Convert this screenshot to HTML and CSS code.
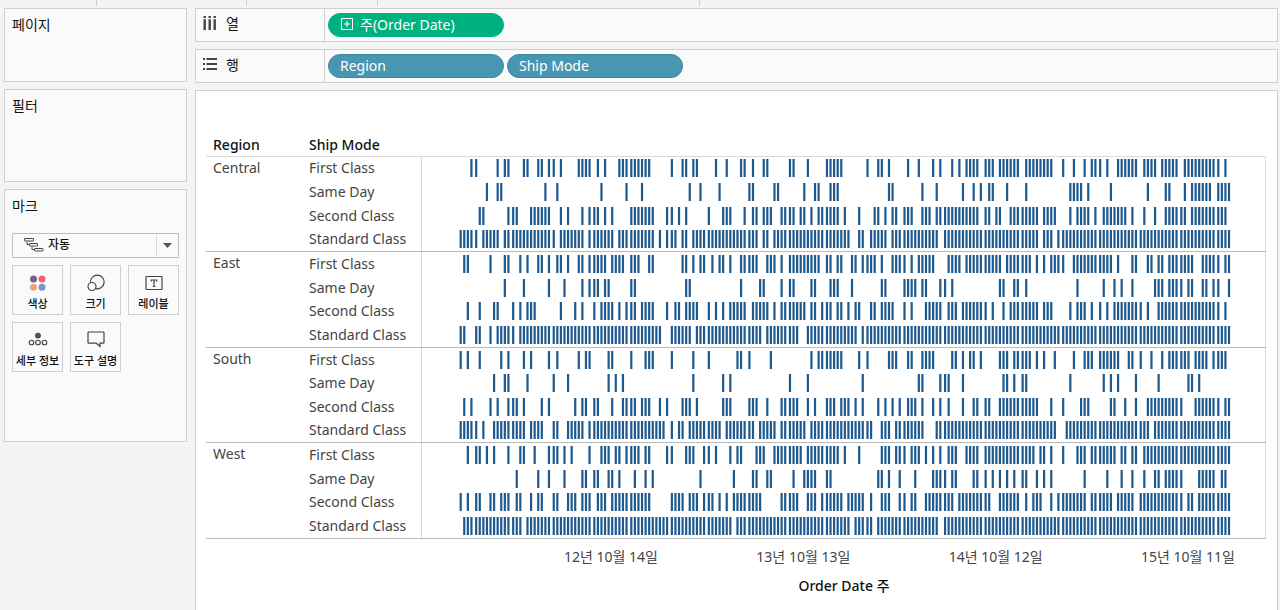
FILE: index.html
```html
<!DOCTYPE html>
<html lang="ko">
<head>
    <meta charset="UTF-8">
    <meta name="viewport" content="width=device-width, initial-scale=1.0">
    <title>Order Date</title>
    <link rel="stylesheet" href="styles.css">
</head>
<body>
<div class="tabs">
    <span class="tab tab-data"></span>
    <span class="tab tab-analytics"></span>
    <span class="tab tab-tools"></span>
    <span class="tab tab-format"></span>
</div>

<div class="workspace">
    <aside class="sidebar">
        <section class="card pages">
            <h2>페이지</h2>
        </section>

        <section class="card filters">
            <h2>필터</h2>
        </section>

        <section class="card marks">
            <h2>마크</h2>
            <div class="mark-type">
                <svg class="mark-icon" width="20" height="14" viewBox="0 0 20 14" fill="none" stroke="#444">
                    <rect x="0.5" y="0.5" width="9" height="2.5" rx="0.5"/>
                    <rect x="5.5" y="5.5" width="8" height="2.5" rx="0.5"/>
                    <rect x="10.5" y="10.500" width="8.5" height="2.5" rx="0.5"/>
                    <path d="M3 3.500v3h2M8 8.500v3h2"/>
                </svg>
                <select aria-label="마크 유형">
                    <option>자동</option>
                </select>
                <svg class="mark-arrow" width="9" height="5" viewBox="0 0 9 5"><path d="M0 0h9L4.500 5z" fill="#555"/></svg>
            </div>
            <div class="mark-buttons">
                <button type="button">
                    <svg width="20" height="20" viewBox="0 0 20 20">
                        <circle cx="5.500" cy="6" r="3.500" fill="#75608f"/>
                        <circle cx="14" cy="6" r="3.500" fill="#f0647a"/>
                        <circle cx="5.500" cy="14.300" r="3.500" fill="#f2a172"/>
                        <circle cx="14" cy="14.300" r="3.500" fill="#7399c6"/>
                    </svg>
                    색상
                </button>
                <button type="button">
                    <svg width="20" height="20" viewBox="0 0 20 20" fill="#fafafa" stroke="#444" stroke-width="1.200">
                        <circle cx="11.300" cy="9" r="6.800"/>
                        <circle cx="6" cy="13.500" r="4"/>
                    </svg>
                    크기
                </button>
                <button type="button">
                    <svg width="20" height="20" viewBox="0 0 20 20" fill="none" stroke="#444" stroke-width="1.200">
                        <rect x="2" y="3.500" width="16" height="13" rx="0.500"/>
                        <path d="M7.300 8.500V7h5.400v1.500M10 7v6.500M8.700 13.500h2.600"/>
                    </svg>
                    레이블
                </button>
                <button type="button">
                    <svg width="20" height="20" viewBox="0 0 20 20" fill="none" stroke="#444" stroke-width="1.100">
                        <circle cx="10" cy="5.500" r="2.300" fill="#555"/>
                        <circle cx="3.500" cy="12.500" r="2.300"/>
                        <circle cx="10" cy="12.500" r="2.300"/>
                        <circle cx="16.500" cy="12.500" r="2.300"/>
                    </svg>
                    세부 정보
                </button>
                <button type="button">
                    <svg width="20" height="20" viewBox="0 0 20 20" fill="none" stroke="#444" stroke-width="1.200">
                        <path d="M2.800 2h14.400q.8 0 .8.800v9.600q0 .8-.8.800H14v3.300l-3.800-3.300H2.800q-.8 0-.8-.8V2.800q0-.8.8-.8z"/>
                    </svg>
                    도구 설명
                </button>
            </div>
        </section>
    </aside>

    <main class="main">
        <div class="shelf">
            <div class="shelf-name">
                <svg width="16" height="16" viewBox="0 0 16 16" fill="#444">
                    <path d="M1.500 1h2.400v2H1.500zM6.500 1h2.400v2H6.500zM11.500 1h2.400v2h-2.400zM1.500 4.200h2.400V15H1.500zM6.500 4.200h2.400V15H6.500zM11.500 4.200h2.400V15h-2.400z"/>
                </svg>
                열
            </div>
            <div class="pills">
                <button type="button" class="pill pill-green">
                    <svg width="12" height="12" viewBox="0 0 12 12" fill="none" stroke="#fff">
                        <path d="M.5.5h11v11H.5zM6 3v6M3 6h6"/>
                    </svg>
                    주(Order Date)
                </button>
            </div>
        </div>

        <div class="shelf">
            <div class="shelf-name">
                <svg width="16" height="16" viewBox="0 0 16 16" fill="#444">
                    <path d="M1 2h2v2H1zM1 7h2v2H1zM1 12h2v2H1zM4.500 2H15v2H4.500zM4.500 7H15v2H4.500zM4.500 12H15v2H4.500z"/>
                </svg>
                행
            </div>
            <div class="pills">
                <button type="button" class="pill">Region</button>
                <button type="button" class="pill">Ship Mode</button>
            </div>
        </div>

        <section class="view">
            <table class="chart">
                <thead>
                <tr>
                    <th class="col-region">Region</th>
                    <th class="col-mode">Ship Mode</th>
                    <th class="col-plot"></th>
                </tr>
                </thead>
                <tbody id="chartBody"></tbody>
            </table>
            <div class="axis">
                <span>12년 10월 14일</span>
                <span>13년 10월 13일</span>
                <span>14년 10월 12일</span>
                <span>15년 10월 11일</span>
            </div>
            <p class="axis-title">Order Date 주</p>
        </section>
    </main>
</div>

<script src="chart.js"></script>
</body>
</html>
```
FILE: styles.css
```css
* {
    box-sizing: border-box;
}

body {
    margin: 0;
    min-height: 100vh;
    display: flex;
    flex-direction: column;
    background-color: #f4f4f4;
    color: #111;
    font-family: "Noto Sans", "Noto Sans CJK KR", sans-serif;
    font-size: 14px;
}

button,
select {
    font-family: inherit;
    color: inherit;
}

.tabs {
    display: flex;
    height: 8px;
    padding-bottom: 2px;
}

.tab {
    border-right: 1px solid #d0d0d0;
}

.tab-data {
    width: 97px;
}

.tab-analytics {
    width: 150px;
}

.tab-tools {
    width: 131px;
}

.tab-format {
    width: 322px;
}

.workspace {
    flex: 1;
    display: flex;
    gap: 8px;
    padding: 0 2px 0 4px;
}

.sidebar {
    width: 183px;
    display: flex;
    flex-direction: column;
    gap: 7px;
}

.card {
    padding: 6px 7px;
    background-color: #fafafa;
    border: 1px solid #cfcfcf;
}

.card h2 {
    margin: 0;
    font-size: 14px;
    font-weight: 400;
    line-height: 20px;
}

.pages {
    height: 74px;
}

.filters {
    height: 93px;
}

.marks {
    height: 253px;
}

.mark-type {
    position: relative;
    margin-top: 17px;
}

.mark-type select {
    display: block;
    width: 100%;
    height: 25px;
    padding: 0 0 2px 35px;
    appearance: none;
    background: linear-gradient(#ddd, #ddd) right 21px top / 1px 100% no-repeat #fafafa;
    border: 1px solid #bbb;
    border-radius: 1px;
    font-size: 12px;
    font-weight: 500;
}

.mark-icon {
    position: absolute;
    left: 12px;
    top: 5px;
}

.mark-arrow {
    position: absolute;
    right: 7px;
    top: 10px;
}

.mark-buttons {
    display: grid;
    grid-template-columns: repeat(3, 1fr);
    gap: 7px;
    margin-top: 7px;
}

.mark-buttons button {
    display: flex;
    flex-direction: column;
    align-items: center;
    justify-content: flex-end;
    gap: 3px;
    height: 50px;
    padding: 0 0 2px;
    background-color: #fafafa;
    border: 1px solid #cfcfcf;
    font-size: 11px;
    font-weight: 500;
    line-height: 16px;
    white-space: nowrap;
}

.main {
    flex: 1;
    min-width: 0;
    display: flex;
    flex-direction: column;
    gap: 7px;
}

.shelf {
    display: flex;
    height: 34px;
    background-color: #fafafa;
    border: 1px solid #cfcfcf;
}

.shelf-name {
    display: flex;
    align-items: center;
    gap: 8px;
    width: 129px;
    padding: 0 0 4px 6px;
    border-right: 1px solid #cfcfcf;
}

.pills {
    display: flex;
    align-items: center;
    gap: 3px;
    padding-left: 3px;
}

.pill {
    display: flex;
    align-items: center;
    gap: 7px;
    width: 176px;
    height: 24px;
    padding: 0 11px 2px;
    background-color: #4996b2;
    border: 1px solid #3b87a3;
    border-radius: 12px;
    color: #fff;
    font-size: 14px;
}

.pill-green {
    padding-left: 12px;
    background-color: #00b180;
    border-color: #00b180;
}

.view {
    flex: 1;
    padding: 44px 11px 0 10px;
    background-color: #fff;
    border: 1px solid #cfcfcf;
    border-bottom: none;
}

.chart {
    width: 100%;
    height: 404px;
    table-layout: fixed;
    border-collapse: collapse;
    color: #444;
}

.chart th,
.chart td {
    padding: 0;
    text-align: left;
    line-height: 20px;
}

.chart thead th {
    height: 21px;
    color: #111;
    font-weight: 500;
    border-bottom: 1px solid #d9d9d9;
}

.chart tbody th {
    font-weight: 400;
}

.chart .region-end > * {
    border-bottom: 1px solid #b9b9b9;
}

.chart .col-region {
    width: 95px;
    padding-left: 7px;
}

.chart .region {
    padding: 1px 0 0 7px;
    vertical-align: top;
    border-bottom: 1px solid #b9b9b9;
}

.chart .col-mode {
    width: 120px;
    padding-left: 8px;
}

.chart .mode {
    padding-left: 8px;
    border-right: 1px solid #d9d9d9;
}

.chart .plot {
    border-right: 1px solid #d9d9d9;
}

.plot svg {
    display: block;
    width: 100%;
    height: 18px;
    fill: #1f5a8f;
}

.axis {
    display: flex;
    justify-content: space-between;
    padding: 8px 31px 0 358px;
    color: #444;
    line-height: 20px;
}

.axis-title {
    margin: 9px 0 0 216px;
    text-align: center;
    font-weight: 500;
    line-height: 20px;
}
```
FILE: chart.js
```js
// weeks that have orders, counted from the first week; "a-b" is a run of weeks
const data = {
    'Central': {
        'First Class': '3 4 10 12 13 17 18 21 22 24 25 27 32-35 37 39 43-51 57 60 61 63 64 69 72 76 77 79 82 83 89 90 94 99-103 110 113 114 116 121 124 128 130 133 135 137-140 142-144 146-151 153-160 163 166 169 171-173 175 178-183 185-188 190-194 196-205 207',
        'Same Day': '7 10 11 23 26 38 45 49 62 65 70 78 79 85 86 93 96 97 100-102 116 117 125 129 136 139 141 143 144 148 153 165-168 170 176 186 191 192 196 198-203 205-208',
        'Second Class': '5 6 13-15 19-24 27 29 33 35-37 39 41 46-52 56 57 59 61 67 71-73 77 79 80 82-84 87-90 92 93 95 97-102 104 108 112 113 115 117 118 120-122 125-127 129-140 142 143 145 146 149-156 158-161 165 167-170 172 174-180 182 185 188 191-196 198-207',
        'Standard Class': '0-4 6-10 12-25 27-33 35-41 43-52 54 56-58 60 61 63-80 82 83 85-105 108 109 111-115 117-129 131-156 158-160 162-208'
    },
    'East': {
        'First Class': '1 2 8 12 13 16 18 21 22 24 26 27 29 32 33 35-39 41-44 46-48 51 52 60 61 63 65 66 68 70 71 73 76-80 83-85 87 89-97 99 100 102 103 106 107 109-112 114 117-120 122 124-128 132-135 137-146 148-154 156 158 160-163 166-176 178 182 183 186 187 189 190 192-198 201-205 207 208',
        'Same Day': '12 17 24 28 33 35-37 39 40 46 47 61 62 76 81 82 87 89 90 95 96 100-102 106 114 115 120-123 125 126 130 131 133 146 147 150 151 153 167 174 177 179 182 188-190 192-195 197 198 201 202 204 205 208',
        'Second Class': '2 5 9 10 14 16 18-20 27 31 33 36 38-41 43 45-47 49-52 56 58 59 61-64 67 69 71 73-77 79-83 85 87-93 95 96 98-100 102 103 105 107 108 111 112 114-117 120 122 126-130 132-134 136-142 144 147 149-156 158-160 165 167-169 171 173 175 177-184 186 189-205 207',
        'Standard Class': '0 1 4 5 8 10-14 16-54 57-62 64-81 83-91 94-107 109-208'
    },
    'South': {
        'First Class': '0 2 5 11 13 17 19 24 26 32 34 35 40 41 46 50-52 57 63 67 75 76 78 84 95 97-103 108 110 116-118 121 122 125-128 133 134 136 138 139 141 146-148 150-154 156 158 161 166 169-171 173-178 181 182 184 187 190 192-197 199-202 204-207',
        'Same Day': '9 12 13 18 25 29 40 42 44 63 71 73 89 94 109 124 125 130-132 136 147 148 150 152 153 165 174 176 178 183 189 197 198 200',
        'Second Class': '1 3 8 10 13-15 17 22 24 31 33 34 36 37 41 44-47 49-51 54 56 60-62 64 71-73 78-80 83 87-91 94 96 99-101 103-105 107 109 113 115 117 119 121-123 125 128 130 132 136 139 140 142 143 146-156 160 163 168-170 176 177 180 183 186-195 199-205 207 208',
        'Standard Class': '0-4 6 9-17 19-22 25 26 29-33 35-55 57 59 60 62-70 72-79 81-85 87-93 95-111 114-116 118-125 129-161 164-186 188-208'
    },
    'West': {
        'First Class': '2 4 5 7 9 13 16 17 20 24-26 28 30 35 38-40 42 43 45-48 50 51 56 57 61-63 66 67 69 73 75 76 80-82 85-92 94-102 104 108 114-116 118-120 122-124 126 128 130 132-134 137-140 142-155 157 158 160 163 167-169 171-177 179 180 182 183 185-208',
        'Same Day': '15 21 24 28 33 34 36 37 40 41 43 47 50 52 65 74 79 80 83 84 90 93-96 99 100 113 114 116 119 123 128-131 133 134 139 140 142 144 146 148 150 152 153 156 158 160 169 175 179 182 185 188 189 191-195 200-204 206 207',
        'Second Class': '0 2 4 5 8 9 11-13 15 16 19 21 22 25 26 29-31 33-35 37-39 41-51 57-60 62-64 66-68 70 72 74-81 87-91 94-96 98-103 105-109 111 114-116 119 120 122 123 126-133 135-143 146-151 153 155-157 160 162-169 171-176 178-182 184-195 197 198 200-208',
        'Standard Class': '1-16 18-73 75-105 107-111 113-129 131-208'
    }
};

// width of the plot in chart units, and where the first week starts
const PLOT_WIDTH = 707;
const FIRST_WEEK = 31.5;
const WEEK = 3.0944;

function parseWeeks(text) {
    const weeks = [];
    text.split(' ').forEach(part => {
        const [from, to = from] = part.split('-').map(Number);
        for (let week = from; week <= to; week++) {
            weeks.push(week);
        }
    });
    return weeks;
}

function drawMarks(text) {
    const bars = parseWeeks(text).map(week => {
        const x = FIRST_WEEK + Math.floor(week * WEEK + 0.684);
        return `<rect x="${x}" y="0" width="1.85" height="18"/>`;
    });
    return `<svg viewBox="0 0 ${PLOT_WIDTH} 18" preserveAspectRatio="none">${bars.join('')}</svg>`;
}

const body = document.getElementById('chartBody');

Object.entries(data).forEach(([region, modes]) => {
    const names = Object.keys(modes);

    names.forEach((mode, index) => {
        const row = document.createElement('tr');
        if (index === names.length - 1) {
            row.className = 'region-end';
        }
        const regionCell = index === 0 ? `<th class="region" rowspan="${names.length}">${region}</th>` : '';
        row.innerHTML = `${regionCell}<th class="mode">${mode}</th><td class="plot">${drawMarks(modes[mode])}</td>`;
        body.appendChild(row);
    });
});
```
